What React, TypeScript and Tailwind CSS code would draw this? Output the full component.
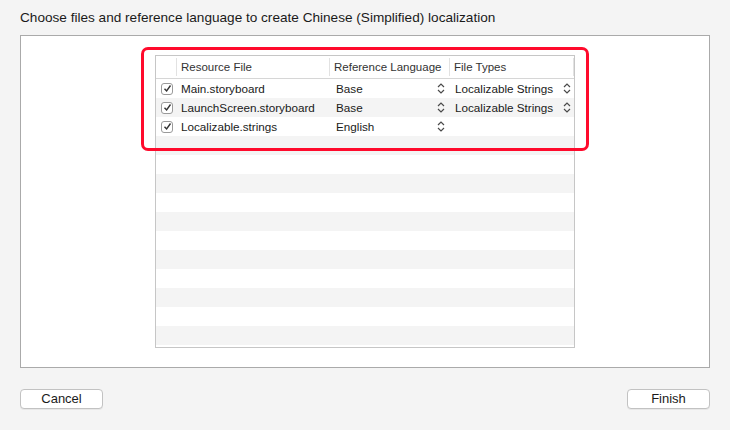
import React from 'react';

const rows = [
  { file: 'Main.storyboard', lang: 'Base', type: 'Localizable Strings' },
  { file: 'LaunchScreen.storyboard', lang: 'Base', type: 'Localizable Strings' },
  { file: 'Localizable.strings', lang: 'English', type: '' }
];

function Stepper() {
  return (
    <svg width="8" height="11" viewBox="0 0 8 11" className="shrink-0">
      <path d="M1 4 L4 1 L7 4" fill="none" stroke="#4a4a4a" strokeWidth="1.2" />
      <path d="M1 7 L4 10 L7 7" fill="none" stroke="#4a4a4a" strokeWidth="1.2" />
    </svg>
  );
}

function Check() {
  return (
    <div className="w-[12px] h-[12px] rounded-[3px] border border-[#9a9a9a] bg-white flex items-center justify-center">
      <svg width="9" height="9" viewBox="0 0 9 9">
        <path d="M1.5 4.8 L3.6 7 L7.5 1.5" fill="none" stroke="#333" strokeWidth="1.4" />
      </svg>
    </div>
  );
}

export default function App() {
  const total = 14;
  return (
    <div
      className="w-[730px] h-[430px] bg-[#f4f4f4] relative text-[#1a1a1a]"
      style={{ fontFamily: '"Liberation Sans", Arial, sans-serif' }}
    >
      <div className="h-[35px] pl-[20px] pt-[10px] text-[13.6px] leading-[16px]">
        Choose files and reference language to create Chinese (Simplified) localization
      </div>

      <div className="ml-[20px] w-[690px] h-[333px] bg-white border border-[#aaaaaa] pt-[19px] pl-[134px]">
        <div className="w-[420px] h-[293px] border border-[#c6c6c6] flex flex-col text-[11.7px]">
          {/* header */}
          <div className="h-[23px] flex items-center border-b border-[#d6d6d6] text-[#333] text-[11.5px]">
            <div className="w-[21px] h-[18px] border-r border-[#e2e2e2]"></div>
            <div className="w-[153px] h-[18px] border-r border-[#e2e2e2] pl-[4px] leading-[18px]">Resource File</div>
            <div className="w-[120px] h-[18px] border-r border-[#e2e2e2] pl-[4px] leading-[18px]">Reference Language</div>
            <div className="w-[124px] h-[18px] border-r border-[#e2e2e2] pl-[4px] leading-[18px]">File Types</div>
          </div>
          {Array.from({ length: total }).map((_, i) => {
            const r = rows[i];
            return (
              <div
                key={i}
                className={'h-[19px] flex items-center shrink-0 ' + (i % 2 == 1 ? 'bg-[#f4f4f4]' : 'bg-white')}
              >
                {r && (
                  <>
                    <div className="w-[21px] pl-[5px]"><Check /></div>
                    <div className="w-[153px] pl-[4px]">{r.file}</div>
                    <div className="w-[120px] pl-[6px] pr-[5px] flex items-center justify-between">
                      <span>{r.lang}</span>
                      <Stepper />
                    </div>
                    <div className="w-[124px] pl-[5px] pr-[3px] flex items-center justify-between">
                      <span>{r.type}</span>
                      {r.type != '' && <Stepper />}
                    </div>
                  </>
                )}
              </div>
            );
          })}
        </div>
      </div>

      {/* highlight */}
      <div className="absolute left-[141px] top-[47px] w-[448px] h-[104px] border-[3px] border-[#ff0a2c] rounded-[7px]"></div>

      <div className="flex justify-between px-[20px] mt-[21px]">
        <button className="w-[83px] h-[20px] bg-white border border-[#c2c2c2] rounded-[4px] text-[13px] leading-[18px] text-[#1a1a1a] shadow-[0_1px_0_rgba(0,0,0,0.05)]">
          Cancel
        </button>
        <button className="w-[83px] h-[20px] bg-white border border-[#c2c2c2] rounded-[4px] text-[13px] leading-[18px] text-[#1a1a1a] shadow-[0_1px_0_rgba(0,0,0,0.05)]">
          Finish
        </button>
      </div>
    </div>
  );
}
